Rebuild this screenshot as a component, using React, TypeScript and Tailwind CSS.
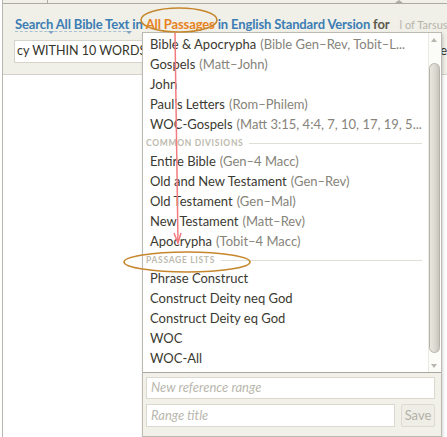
import React from 'react';

type Row =
  | { kind: 'item'; name: string; range?: string }
  | { kind: 'head'; label: string };

const rows: Row[] = [
  { kind: 'item', name: 'Bible & Apocrypha', range: '(Bible Gen–Rev, Tobit–L...' },
  { kind: 'item', name: 'Gospels', range: '(Matt–John)' },
  { kind: 'item', name: 'John' },
  { kind: 'item', name: "Paul's Letters", range: '(Rom–Philem)' },
  { kind: 'item', name: 'WOC-Gospels', range: '(Matt 3:15, 4:4, 7, 10, 17, 19, 5...' },
  { kind: 'head', label: 'Common Divisions' },
  { kind: 'item', name: 'Entire Bible', range: '(Gen–4 Macc)' },
  { kind: 'item', name: 'Old and New Testament', range: '(Gen–Rev)' },
  { kind: 'item', name: 'Old Testament', range: '(Gen–Mal)' },
  { kind: 'item', name: 'New Testament', range: '(Matt–Rev)' },
  { kind: 'item', name: 'Apocrypha', range: '(Tobit–4 Macc)' },
  { kind: 'head', label: 'Passage Lists' },
  { kind: 'item', name: 'Phrase Construct' },
  { kind: 'item', name: 'Construct Deity neq God' },
  { kind: 'item', name: 'Construct Deity eq God' },
  { kind: 'item', name: 'WOC' },
  { kind: 'item', name: 'WOC-All' },
];

const PassageMenu: React.FC = () => {
  return (
    <div className="absolute left-[142px] top-[32px] w-[300px] h-[405px] flex flex-col border border-[#bcbab0] bg-white shadow-[1px_2px_3px_rgba(0,0,0,0.18)]">
      {/* list + scrollbar */}
      <div className="flex h-[340px] border-b border-[#a9a79d]">
        <div className="flex-1 pt-[2px] pl-[3px] pr-[6px]">
          {rows.map((r, i) =>
            r.kind === 'item' ? (
              <div key={i} className="h-[20px] flex items-center pl-[4px] text-[13px] text-[#3b3a31] whitespace-nowrap overflow-hidden">
                <span>{r.name}</span>
                {r.range && <span className="ml-[4px] text-[#86837a]">{r.range}</span>}
              </div>
            ) : (
              <div key={i} className="h-[17px] flex items-center gap-[6px]">
                <span className="text-[8.5px] font-bold uppercase tracking-[0.08em] text-[#bdbaae]">{r.label}</span>
                <div className="flex-1 h-px bg-[#e0ded6]" />
              </div>
            )
          )}
        </div>
        <div className="w-[15px] mr-[1px] flex flex-col items-center bg-[#fbfbf8] border-l border-[#ebe9e2]">
          <div className="h-[14px] flex items-center justify-center">
            <div className="w-0 h-0 border-l-[3px] border-r-[3px] border-b-[4px] border-l-transparent border-r-transparent border-b-[#b9b7ad]" />
          </div>
          <div className="mt-[16px] w-[11px] h-[290px] rounded-full border border-[#b5b3a9] bg-gradient-to-r from-[#e9e7df] via-[#dcdad1] to-[#c9c7bd]" />
          <div className="mt-auto h-[12px] flex items-center justify-center">
            <div className="w-0 h-0 border-l-[3px] border-r-[3px] border-t-[4px] border-l-transparent border-r-transparent border-t-[#b9b7ad]" />
          </div>
        </div>
      </div>
      {/* footer */}
      <div className="flex-1 bg-[#f1f0e9] px-[3px] pt-[4px] flex flex-col gap-[5px]">
        <div className="h-[22px] mr-[3px] bg-white border border-[#dad8cf] flex items-center px-[4px] text-[13px] italic text-[#b9b7ae]">
          New reference range
        </div>
        <div className="flex gap-[6px] mr-[3px]">
          <div className="flex-1 h-[23px] bg-white border border-[#dad8cf] flex items-center px-[4px] text-[13px] italic text-[#b9b7ae]">
            Range title
          </div>
          <div className="w-[34px] h-[23px] border border-[#dcdad1] rounded-[2px] bg-[#eeede6] flex items-center justify-center text-[13px] text-[#b3b1a7]">
            Save
          </div>
        </div>
      </div>
    </div>
  );
};

const Annotations: React.FC = () => (
  <svg className="absolute left-0 top-0 pointer-events-none" width="447" height="437" viewBox="0 0 447 437">
    <ellipse cx="179" cy="20" rx="38" ry="12" fill="none" stroke="#c6872c" strokeWidth="1.6" />
    <ellipse cx="187" cy="262" rx="63" ry="10" fill="none" stroke="#c6872c" strokeWidth="1.6" />
    <path d="M175 33 L178 243" stroke="#f17b7f" strokeWidth="1.5" fill="none" />
    <path d="M174 233 L178 243 L181 233" stroke="#f17b7f" strokeWidth="1.5" fill="none" />
  </svg>
);

export default function App() {
  return (
    <div className="relative w-[447px] h-[437px] overflow-hidden bg-white font-['Lato','Open_Sans',sans-serif]">
      <div className="ml-[2px] h-full border-l border-[#b8b6ac] flex flex-col">
        {/* top band */}
        <div className="h-[75px] bg-[#f0efe8] border-b border-[#d3d1c8] flex flex-col">
          <div className="relative h-[4px] border-b border-[#aeaca2]">
            <div className="absolute left-[44px] top-0 h-[3px] w-px bg-[#aeaca2]" />
            <div className="absolute left-[392px] top-0 w-0 h-0 border-l-[4px] border-r-[4px] border-b-[3px] border-l-transparent border-r-transparent border-b-[#aeaca2]" />
          </div>
          <div className="mt-[11px] pl-[12px] flex items-baseline whitespace-nowrap text-[13px] font-bold tracking-[-0.01em]">
            <span className="relative text-[#3b7db4]">
              Search All Bible Text in
              <span className="absolute left-0 top-[16px] w-[116px] border-b border-dashed border-[#a9c1d4]" />
              <span className="absolute left-[33px] top-[16px] w-0 h-0 border-l-[3px] border-r-[3px] border-t-[3px] border-l-transparent border-r-transparent border-t-[#7fa4c4]" />
              <span className="absolute left-[111px] top-[16px] w-0 h-0 border-l-[3px] border-r-[3px] border-t-[3px] border-l-transparent border-r-transparent border-t-[#7fa4c4]" />
            </span>
            <span className="text-[#e8821e] ml-[3px]">All Passages</span>
            <span className="text-[#3b7db4] ml-[3px]">in English Standard Version</span>
            <span className="text-[#5b5a4c] ml-[3px]">for</span>
            <span className="text-[11px] font-normal tracking-normal text-[#b7b5ab] ml-[10px]">l of Tarsus"</span>
          </div>
          <div className="mt-[5px] pl-[11px] flex">
            <div className="w-[400px] h-[23px] bg-white border border-[#d5d3ca] flex items-center pl-[2px] text-[12.5px] text-[#35342b] whitespace-nowrap overflow-hidden">
              cy WITHIN 10 WORDS I
            </div>
            <div className="ml-[29px] h-[23px] flex items-center text-[13px] text-[#35342b]">e</div>
          </div>
        </div>
        <div className="flex-1 bg-white" />
      </div>
      <PassageMenu />
      <Annotations />
    </div>
  );
}
